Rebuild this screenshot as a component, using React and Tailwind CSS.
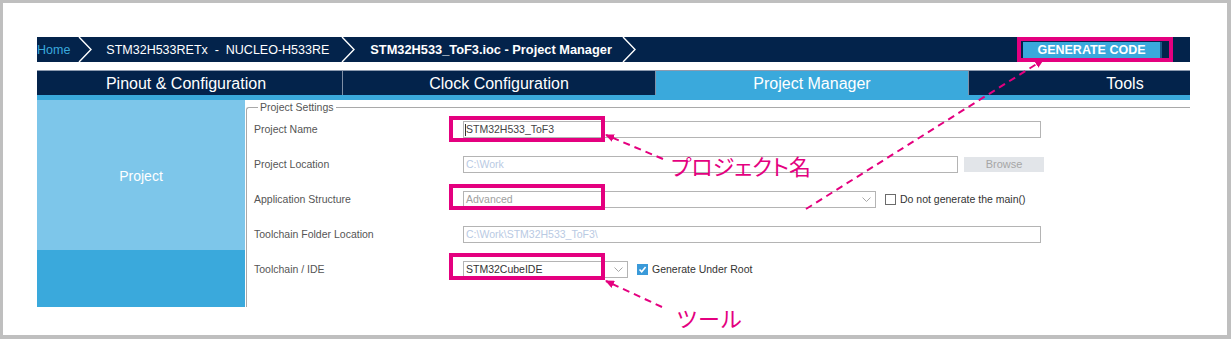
import React from "react";

const Chevron = ({ className }) => (
  <svg width="14" height="25" viewBox="0 0 14 25" className={className}>
    <polyline points="1,0 13,12.5 1,25" fill="none" stroke="#ffffff" strokeWidth="1.4" />
  </svg>
);

const SelectArrow = () => (
  <svg width="9" height="5" viewBox="0 0 9 5" className="mr-[4px] shrink-0">
    <polyline points="0.5,0.5 4.5,4.5 8.5,0.5" fill="none" stroke="#a8a8a8" strokeWidth="1" />
  </svg>
);

const CheckBox = ({ checked }) =>
  checked ? (
    <div className="flex h-[11px] w-[11px] items-center justify-center bg-[#3a9ad9]">
      <svg width="9" height="9" viewBox="0 0 9 9">
        <polyline points="1.5,4.5 3.7,6.8 7.6,2" fill="none" stroke="#ffffff" strokeWidth="1.6" />
      </svg>
    </div>
  ) : (
    <div className="h-[11px] w-[11px] border border-[#6b6b6b] bg-white" />
  );

const Row = ({ label, children }) => (
  <div className="flex h-[35px] items-center">
    <div className="w-[209px] text-[10.5px] text-[#555]">{label}</div>
    {children}
  </div>
);

const PinkBox = ({ className }) => (
  <div className={`absolute border-4 border-[#e4007f] ${className}`} />
);

export default function App() {
  return (
    <div className="relative h-[347px] w-[1231px] overflow-hidden bg-white font-['Liberation_Sans',Arial,sans-serif]">
      <div className="h-[339px] border-t-[3px] border-l-[3px] border-r-4 border-b-4 border-[#bfbfbf] pl-[34px] pr-[37px] pt-[34px]">
        {/* breadcrumb */}
        <div className="flex h-[25px] items-center overflow-hidden bg-[#03234b] pt-[1px] text-[12.5px] text-white">
          <span className="text-[#3aa9dc]">Home</span>
          <Chevron className="ml-[8px] -mt-[1px] shrink-0" />
          <span className="ml-[14px] whitespace-pre">STM32H533RETx  -  NUCLEO-H533RE</span>
          <Chevron className="ml-[12px] -mt-[1px] shrink-0" />
          <span className="ml-[15px] text-[12.8px] font-bold">STM32H533_ToF3.ioc - Project Manager</span>
          <Chevron className="ml-[10px] -mt-[1px] shrink-0" />
          <div className="ml-auto mr-[28px] flex h-[17px] w-[139px] items-center justify-center border-r-2 border-[#1d5a88] bg-[#3aa9dc] text-[12.5px] font-bold">
            GENERATE CODE
          </div>
        </div>

        {/* tabs */}
        <div className="mt-[8px] flex h-[25px] overflow-hidden border-t border-[#8d9bb0] bg-[#03234b] text-[16px] text-white">
          <div className="-ml-[7px] flex w-[312px] shrink-0 items-center justify-center pt-[2px]">Pinout &amp; Configuration</div>
          <div className="flex w-[313px] shrink-0 items-center justify-center border-l border-[#7f8fa6] pt-[2px]">Clock Configuration</div>
          <div className="flex w-[313px] shrink-0 items-center justify-center border-l border-[#7f8fa6] bg-[#3aa9dc] pt-[2px]">Project Manager</div>
          <div className="flex w-[313px] shrink-0 items-center justify-center border-l border-[#7f8fa6] pt-[2px]">Tools</div>
        </div>
        <div className="h-[5px] bg-[#3aa9dc]" />

        {/* main */}
        <div className="flex h-[207px]">
          <div className="flex w-[208px] flex-col">
            <div className="flex h-[150px] items-center justify-center bg-[#7dc6ea] pt-[2px] text-[14px] text-white">Project</div>
            <div className="flex-1 bg-[#3aa9dc]" />
          </div>
          <fieldset className="ml-[1px] mt-[1px] h-[206px] flex-1 rounded-tl-[3px] border-l border-t border-[#a9a9a9] pl-[7px]">
            <legend className="ml-[4px] px-[2px] text-[10.5px] leading-[12px] text-[#555]">Project Settings</legend>
            <div className="-mt-[1px]">
              <Row label="Project Name">
                <div className="flex h-[17px] w-[578px] items-center border border-[#b4b4b4] bg-white pl-[1px] text-[10.5px] text-[#444]">
                  <span className="h-[12px] w-px shrink-0 bg-[#333]" />
                  STM32H533_ToF3
                </div>
              </Row>
              <Row label="Project Location">
                <div className="flex h-[17px] w-[495px] items-center border border-[#b4b4b4] bg-white pl-[2px] text-[10.5px] text-[#b9cae3]">
                  C:\Work
                </div>
                <div className="ml-[6px] flex h-[15px] w-[80px] items-center justify-center bg-[#e2e5e9] text-[11px] text-[#a6a6a6]">
                  Browse
                </div>
              </Row>
              <Row label="Application Structure">
                <div className="flex h-[17px] w-[413px] items-center justify-between border border-[#b4b4b4] bg-white pl-[2px] text-[10.5px] text-[#a0a0a0]">
                  Advanced
                  <SelectArrow />
                </div>
                <div className="ml-[9px]">
                  <CheckBox />
                </div>
                <span className="ml-[4px] text-[10.5px] text-[#333]">Do not generate the main()</span>
              </Row>
              <Row label="Toolchain Folder Location">
                <div className="flex h-[17px] w-[578px] items-center border border-[#b4b4b4] bg-white pl-[2px] text-[10.5px] text-[#b9cae3]">
                  C:\Work\STM32H533_ToF3\
                </div>
              </Row>
              <Row label="Toolchain / IDE">
                <div className="flex h-[17px] w-[165px] items-center justify-between border border-[#b4b4b4] bg-white pl-[2px] text-[10.5px] text-[#333]">
                  STM32CubeIDE
                  <SelectArrow />
                </div>
                <div className="ml-[9px]">
                  <CheckBox checked />
                </div>
                <span className="ml-[4px] text-[10.5px] text-[#333]">Generate Under Root</span>
              </Row>
            </div>
          </fieldset>
        </div>
      </div>

      {/* annotations */}
      <PinkBox className="left-[1017px] top-[37px] h-[25px] w-[156px]" />
      <PinkBox className="left-[449px] top-[116px] h-[26px] w-[156px]" />
      <PinkBox className="left-[449px] top-[184px] h-[26px] w-[156px]" />
      <PinkBox className="left-[449px] top-[253px] h-[27px] w-[156px]" />

      <svg className="pointer-events-none absolute inset-0" width="1231" height="347">
        <defs>
          <marker id="ah" markerWidth="9" markerHeight="8" refX="8" refY="4" orient="auto" markerUnits="userSpaceOnUse">
            <path d="M0,0 L9,4 L0,8 z" fill="#e4007f" />
          </marker>
        </defs>
        <g stroke="#e4007f" strokeWidth="2" strokeDasharray="7 5" fill="none">
          <line x1="663" y1="159" x2="606" y2="135" markerEnd="url(#ah)" />
          <line x1="806" y1="209" x2="1043" y2="60" markerEnd="url(#ah)" />
          <line x1="662" y1="307" x2="606" y2="281" markerEnd="url(#ah)" />
        </g>
      </svg>

      <div className="absolute left-[671px] top-[154px] font-['Noto_Sans_CJK_JP',sans-serif] text-[22px] leading-none text-[#e4007f] [font-feature-settings:'palt']">
        プロジェクト名
      </div>
      <div className="absolute left-[676px] top-[306px] font-['Noto_Sans_CJK_JP',sans-serif] text-[22px] leading-none text-[#e4007f]">
        ツール
      </div>
    </div>
  );
}
